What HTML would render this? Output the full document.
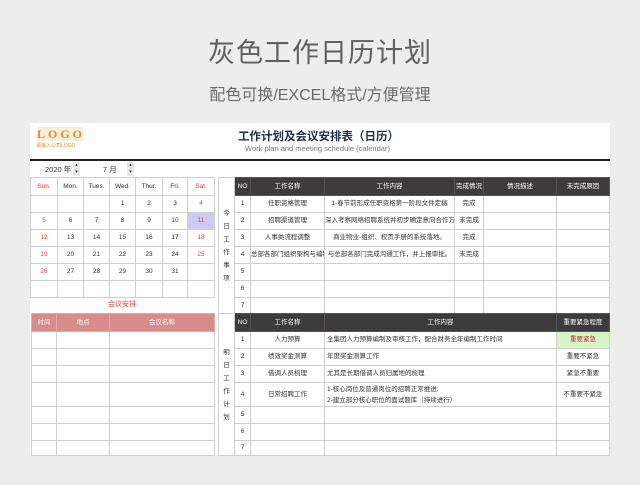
<!DOCTYPE html>
<html><head><meta charset="utf-8"><style>
*{margin:0;padding:0;box-sizing:border-box}
body{width:640px;height:485px;background:#ededed;position:relative;overflow:hidden;font-family:"Liberation Sans","Noto Sans CJK SC",sans-serif;color:#333}
.a{position:absolute}
table{position:absolute;border-collapse:collapse;table-layout:fixed}
td{border:1px solid #cfcfcf;font-size:6.5px;text-align:center;overflow:hidden;white-space:nowrap;padding:0;line-height:1.1}
.dh td{background:#3d3b3b;color:#fff;border-color:#555}
.r{color:#e53935}
.l{text-align:left;padding-left:2px}
</style></head><body>
<div class="a" style="left:0;top:36px;width:640px;text-align:center;font-size:27px;color:#606060;letter-spacing:1px;line-height:34px">灰色工作日历计划</div>
<div class="a" style="left:0;top:86px;width:640px;text-align:center;font-size:16px;color:#6a6a6a;line-height:20px">配色可换/EXCEL格式/方便管理</div>

<div class="a" style="left:30px;top:123px;width:580px;height:332px;background:#fff"></div>
<div class="a" style="left:37px;top:127px;width:46px;height:14px;background:#f7eedc;color:#e38d1c;font-family:'Liberation Serif',serif;font-weight:bold;font-size:12px;letter-spacing:3px;line-height:14px;text-align:center">LOGO</div>
<div class="a" style="left:36px;top:142px;font-size:5px;color:#e38d1c">请输入公司LOGO</div>
<div class="a" style="left:238px;top:128px;font-size:11.5px;font-weight:bold;color:#1f2e48">工作计划及会议安排表（日历）</div>
<div class="a" style="left:245px;top:144px;font-size:7.5px;color:#777">Work plan and meeting schedule (calendar)</div>
<div class="a" style="left:30px;top:159px;width:580px;height:1.5px;background:#222"></div>
<div class="a" style="left:45px;top:164px;font-size:7.5px">2020 年</div>
<div class="a" style="left:73px;top:162px;width:7px;height:14px;background:#e8e8e8;font-size:5px;line-height:7px;text-align:center">▴<br>▾</div>
<div class="a" style="left:103px;top:164px;font-size:7.5px">7 月</div>
<div class="a" style="left:127px;top:162px;width:7px;height:14px;background:#e8e8e8;font-size:5px;line-height:7px;text-align:center">▴<br>▾</div>

<table style="left:30px;top:177px;width:184px">
<colgroup><col style="width:27px"><col style="width:26px"><col style="width:26px"><col style="width:26px"><col style="width:27px"><col style="width:25px"><col style="width:27px"></colgroup>
<tr style="height:18px"><td class="r">Sun.</td><td>Mon.</td><td>Tues.</td><td>Wed.</td><td>Thur.</td><td>Fri.</td><td class="r">Sat.</td></tr>
<tr style="height:17px"><td></td><td></td><td></td><td>1</td><td>2</td><td>3</td><td class="r">4</td></tr>
<tr style="height:17px"><td class="r">5</td><td>6</td><td>7</td><td>8</td><td>9</td><td>10</td><td class="r" style="background:#cccbf7">11</td></tr>
<tr style="height:17px"><td class="r">12</td><td>13</td><td>14</td><td>15</td><td>16</td><td>17</td><td class="r">18</td></tr>
<tr style="height:17px"><td class="r">19</td><td>20</td><td>21</td><td>22</td><td>23</td><td>24</td><td class="r">25</td></tr>
<tr style="height:17px"><td class="r">26</td><td>27</td><td>28</td><td>29</td><td>30</td><td>31</td><td></td></tr>
<tr style="height:17px"><td></td><td></td><td></td><td></td><td></td><td></td><td></td></tr>
</table>
<div class="a r" style="left:30px;top:299px;width:184px;text-align:center;font-size:7px">会议安排</div>
<table style="left:31px;top:313px;width:183px">
<colgroup><col style="width:25px"><col style="width:53px"><col style="width:105px"></colgroup>
<tr style="height:18px;"><td style="background:#d98b8a;color:#fff;border-color:#e2a9a8">时间</td><td style="background:#d98b8a;color:#fff;border-color:#e2a9a8">地点</td><td style="background:#d98b8a;color:#fff;border-color:#e2a9a8">会议名称</td></tr>
<tr style="height:17px"><td></td><td></td><td></td></tr>
<tr style="height:17px"><td></td><td></td><td></td></tr>
<tr style="height:17px"><td></td><td></td><td></td></tr>
<tr style="height:24px"><td></td><td></td><td></td></tr>
<tr style="height:17px"><td></td><td></td><td></td></tr>
<tr style="height:17px"><td></td><td></td><td></td></tr>
<tr style="height:15px"><td></td><td></td><td></td></tr>
</table>

<table style="left:218px;top:177px;width:391px">
<colgroup><col style="width:16px"><col style="width:16px"><col style="width:74px"><col style="width:130px"><col style="width:29px"><col style="width:73px"><col style="width:53px"></colgroup>
<tr class="dh" style="height:18px"><td rowspan="8" style="background:#fff;border-color:#cfcfcf;color:#333;white-space:normal;line-height:13px;font-size:6.5px">今<br>日<br>工<br>作<br>事<br>项</td><td>NO</td><td>工作名称</td><td>工作内容</td><td>完成情况</td><td>情况描述</td><td>未完成原因</td></tr>
<tr style="height:17px"><td>1</td><td>任职资格管理</td><td>1-春节前形成任职资格第一阶段文件定稿</td><td>完成</td><td></td><td></td></tr>
<tr style="height:17px"><td>2</td><td>招聘渠道管理</td><td>深入考察网络招聘系统并初步确定意向合作方</td><td>未完成</td><td></td><td></td></tr>
<tr style="height:17px"><td>3</td><td>人事类流程调整</td><td>商业物业-组织、权责手册的系统落地。</td><td>完成</td><td></td><td></td></tr>
<tr style="height:17px"><td>4</td><td>总部各部门组织架构与编制</td><td>与总部各部门完成沟通工作，并上报审批。</td><td>未完成</td><td></td><td></td></tr>
<tr style="height:17px"><td>5</td><td></td><td></td><td></td><td></td><td></td></tr>
<tr style="height:17px"><td>6</td><td></td><td></td><td></td><td></td><td></td></tr>
<tr style="height:17px"><td>7</td><td></td><td></td><td></td><td></td><td></td></tr>
</table>

<table style="left:218px;top:313px;width:391px">
<colgroup><col style="width:16px"><col style="width:16px"><col style="width:74px"><col style="width:232px"><col style="width:53px"></colgroup>
<tr class="dh" style="height:18px"><td rowspan="8" style="background:#fff;border-color:#cfcfcf;color:#333;white-space:normal;line-height:13px;font-size:6.5px">明<br>日<br>工<br>作<br>计<br>划</td><td>NO</td><td>工作名称</td><td>工作内容</td><td>重要紧急程度</td></tr>
<tr style="height:17px"><td>1</td><td>人力预算</td><td class="l">全集团人力预算编制及审核工作，配合财务全年编制工作时间</td><td style="background:#d6f5c6;color:#c62828">重要紧急</td></tr>
<tr style="height:17px"><td>2</td><td>绩效奖金测算</td><td class="l">年度奖金测算工作</td><td>重要不紧急</td></tr>
<tr style="height:17px"><td>3</td><td>借调人员梳理</td><td class="l">尤其是长期借调人员归属地的梳理</td><td>紧急不重要</td></tr>
<tr style="height:24px"><td>4</td><td>日常招聘工作</td><td class="l" style="line-height:11px">1-核心岗位及普通岗位的招聘正常推进;<br>2-建立部分核心职位的面试题库（持续进行）</td><td>不重要不紧急</td></tr>
<tr style="height:17px"><td>5</td><td></td><td></td><td></td></tr>
<tr style="height:17px"><td>6</td><td></td><td></td><td></td></tr>
<tr style="height:15px"><td>7</td><td></td><td></td><td></td></tr>
</table>
</body></html>
